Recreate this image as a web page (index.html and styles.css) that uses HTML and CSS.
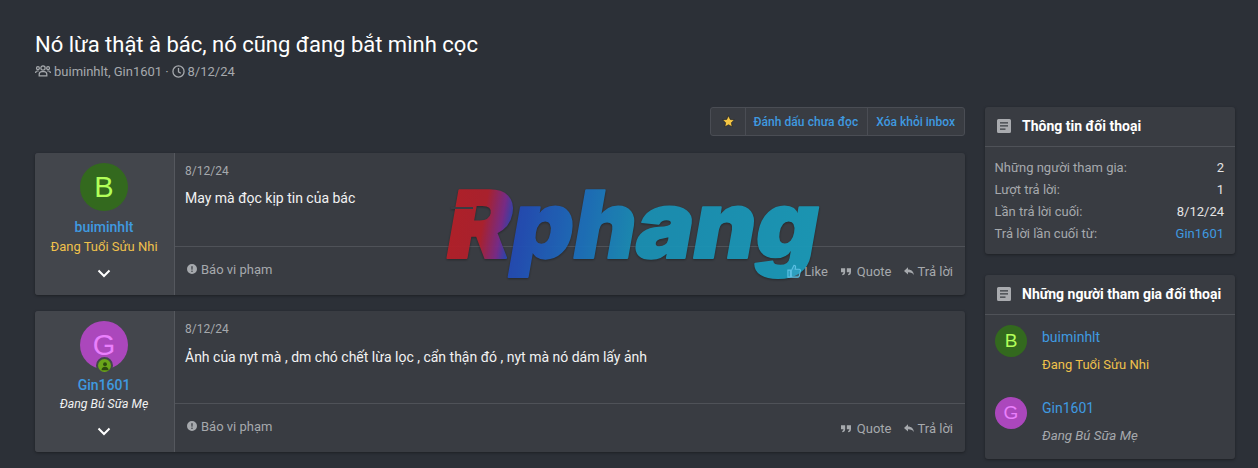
FILE: index.html
```html
<!DOCTYPE html>
<html lang="vi">
<head>
<meta charset="utf-8">
<title>Nó lừa thật à bác, nó cũng đang bắt mình cọc</title>
<link rel="stylesheet" href="styles.css">
</head>
<body>
<svg class="sprite" width="0" height="0" aria-hidden="true">
  <symbol id="doc" viewBox="0 0 14 14"><path fill-rule="evenodd" d="M1.5 0h11A1.5 1.5 0 0 1 14 1.500v11a1.500 1.500 0 0 1-1.500 1.500h-11A1.500 1.500 0 0 1 0 12.500v-11A1.500 1.500 0 0 1 1.500 0zM3 3.200v1.300h8V3.200zM3 6.300v1.300h8V6.300zM3 9.400v1.300h5.500V9.400z"/></symbol>
  <symbol id="flag" viewBox="0 0 14 14"><path fill-rule="evenodd" d="M7 0a7 7 0 1 1 0 14A7 7 0 0 1 7 0zM6 3l.3 5h1.400L8 3zM7 9a1.100 1.100 0 1 0 0 2.200A1.100 1.100 0 0 0 7 9z"/></symbol>
  <symbol id="quote" viewBox="0 0 12 10"><path d="M0 1h5v4.500C5 8 3.500 9.300 1.500 9.500V8C2.500 7.800 3 7 3 6H0zM7 1h5v4.500C12 8 10.500 9.300 8.500 9.500V8C9.500 7.800 10 7 10 6H7z"/></symbol>
  <symbol id="reply" viewBox="0 0 12 10"><path d="M0 4.300 4.800 0v2.500c4 0 6.700 2.500 7.200 7-1.500-2.500-3.500-3.500-7.200-3.500v2.500z"/></symbol>
  <symbol id="chev" viewBox="0 0 14 9"><path d="M1.500 1.500 7 7l5.500-5.500" fill="none" stroke="currentColor" stroke-width="2"/></symbol>
</svg>

<div class="page">
  <header class="head">
    <h1 class="title">Nó lừa thật à bác, nó cũng đang bắt mình cọc</h1>
    <div class="meta">
      <svg class="ico-users" viewBox="0 0 18 14" aria-hidden="true"><g fill="none" stroke="currentColor" stroke-width="1.400"><circle cx="9" cy="3.600" r="2.400"/><path d="M4.700 12.500V11c0-2 1.500-3.300 3-3.300h2.600c1.500 0 3 1.300 3 3.300v1.500z"/><circle cx="3.300" cy="3.800" r="1.600"/><circle cx="14.700" cy="3.800" r="1.600"/><path d="M.7 9.300c0-1.500.8-2.300 2-2.300h1.500M17.300 9.300c0-1.500-.8-2.300-2-2.300h-1.500"/></g></svg>
      <span>buiminhlt, Gin1601</span>
      <span class="dot">·</span>
      <svg class="ico-clock" viewBox="0 0 14 14" aria-hidden="true"><g fill="none" stroke="currentColor" stroke-width="1.400"><circle cx="7" cy="7" r="6"/><path d="M7 3.300V7.400l2.500 1.500"/></g></svg>
      <span>8/12/24</span>
    </div>
  </header>

  <div class="columns">
    <main class="main">
      <div class="actions">
        <div class="btn-group">
          <span class="btn btn-star"><svg class="ico-star" viewBox="0 0 14 14" aria-hidden="true"><path d="M7 .8l1.900 4 4.300.5-3.200 3 .9 4.400L7 10.500l-3.900 2.200.9-4.400-3.200-3 4.300-.5z" fill="#f6c744" stroke="#1d1d1d" stroke-width=".6"/></svg></span>
          <a class="btn btn-mark">Đánh dấu chưa đọc</a>
          <a class="btn">Xóa khỏi inbox</a>
        </div>
      </div>

      <article class="post post-a">
        <aside class="user">
          <div class="avatar avatar-lg avatar-b">B</div>
          <a class="uname">buiminhlt</a>
          <div class="utitle utitle-gold">Đang Tuổi Sửu Nhi</div>
          <svg class="chev"><use href="#chev"/></svg>
        </aside>
        <div class="body">
          <div class="top">
            <div class="date">8/12/24</div>
            <div class="msg">May mà đọc kịp tin của bác</div>
          </div>
          <footer class="foot">
            <span class="report"><svg class="ico-flag"><use href="#flag"/></svg>Báo vi phạm</span>
            <div class="foot-acts">
              <span class="act act-like"><svg class="ico-like" viewBox="0 0 16 16" aria-hidden="true"><path d="M1 7h3v8H1zM5 7.500 8 1.500c1.300 0 2 1 1.800 2.300L9.400 6H14c1 0 1.500.8 1.300 1.700l-1.200 6c-.2.800-.7 1.300-1.500 1.300H5z" fill="#4fb7dc" fill-opacity=".35" stroke="#5cc0e4" stroke-width="1.200"/></svg>Like</span>
              <span class="act"><svg class="ico-q ico-quote"><use href="#quote"/></svg>Quote</span>
              <span class="act"><svg class="ico-q ico-reply"><use href="#reply"/></svg>Trả lời</span>
            </div>
          </footer>
        </div>
      </article>

      <article class="post post-b">
        <aside class="user">
          <div class="avatar avatar-lg avatar-g">G
            <span class="badge"><svg viewBox="0 0 12 12" aria-hidden="true"><circle cx="6" cy="3.800" r="2.300"/><path d="M1.800 11c0-2.500 1.700-4 4.200-4s4.200 1.500 4.200 4z"/></svg></span>
          </div>
          <a class="uname">Gin1601</a>
          <div class="utitle utitle-it">Đang Bú Sữa Mẹ</div>
          <svg class="chev"><use href="#chev"/></svg>
        </aside>
        <div class="body">
          <div class="top">
            <div class="date">8/12/24</div>
            <div class="msg">Ảnh của nyt mà , dm chó chết lừa lọc , cẩn thận đó , nyt mà nó dám lấy ảnh</div>
          </div>
          <footer class="foot">
            <span class="report"><svg class="ico-flag"><use href="#flag"/></svg>Báo vi phạm</span>
            <div class="foot-acts">
              <span class="act"><svg class="ico-q ico-quote"><use href="#quote"/></svg>Quote</span>
              <span class="act"><svg class="ico-q ico-reply"><use href="#reply"/></svg>Trả lời</span>
            </div>
          </footer>
        </div>
      </article>
    </main>

    <aside class="side">
      <section class="block block-info">
        <h3 class="block-head"><svg class="ico-doc"><use href="#doc"/></svg>Thông tin đối thoại</h3>
        <dl class="rows">
          <div class="row"><dt>Những người tham gia:</dt><dd>2</dd></div>
          <div class="row"><dt>Lượt trả lời:</dt><dd>1</dd></div>
          <div class="row"><dt>Lần trả lời cuối:</dt><dd>8/12/24</dd></div>
          <div class="row"><dt>Trả lời lần cuối từ:</dt><dd class="link">Gin1601</dd></div>
        </dl>
      </section>
      <section class="block block-people">
        <h3 class="block-head"><svg class="ico-doc"><use href="#doc"/></svg>Những người tham gia đối thoại</h3>
        <ul class="people">
          <li class="person">
            <div class="avatar avatar-sm avatar-b">B</div>
            <div class="pinfo"><a class="pname">buiminhlt</a><div class="ptitle utitle-gold">Đang Tuổi Sửu Nhi</div></div>
          </li>
          <li class="person">
            <div class="avatar avatar-sm avatar-g">G</div>
            <div class="pinfo"><a class="pname">Gin1601</a><div class="ptitle ptitle-it">Đang Bú Sữa Mẹ</div></div>
          </li>
        </ul>
      </section>
    </aside>
  </div>

  <svg class="watermark" viewBox="0 0 380 100" aria-label="Rphang">
    <defs>
      <linearGradient id="wm" gradientUnits="userSpaceOnUse" x1="0" y1="0" x2="380" y2="0">
        <stop offset="0" stop-color="#b81f26"/>
        <stop offset=".13" stop-color="#b0202c"/>
        <stop offset=".18" stop-color="#7a2a8a"/>
        <stop offset=".21" stop-color="#2348b4"/>
        <stop offset=".4" stop-color="#1c70bb"/>
        <stop offset=".55" stop-color="#1a90b4"/>
        <stop offset="1" stop-color="#1a9ab8"/>
      </linearGradient>
    </defs>
    <text class="wm-text" transform="skewX(-10)" x="16" y="73" textLength="371" lengthAdjust="spacingAndGlyphs" fill="url(#wm)" stroke="url(#wm)">Rphang</text>
    <line class="wm-slit" x1="11" y1="23" x2="33" y2="23"/>
  </svg>
</div>
</body>
</html>
```
FILE: styles.css
```css
* { box-sizing: border-box; }
html, body { margin: 0; height: 468px; overflow: hidden; }
body {
  background: #2c3037;
  font-family: Roboto, "Noto Sans", sans-serif;
  font-size: 13px;
  color: #e4e4e4;
}
.sprite { position: absolute; }
.page { position: relative; padding: 30px 23px 0 35px; }

.title { margin: 0; font-size: 22px; font-weight: 400; line-height: 29px; color: #fff; }
.meta { display: flex; align-items: center; gap: 3px; margin-top: 4px; height: 16px; color: #a6a9ad; font-size: 13px; }
.ico-users { width: 16px; height: 14px; }
.ico-clock { width: 13px; height: 13px; }

.columns { display: flex; gap: 20px; margin-top: 28px; }
.main { width: 930px; }
.side { width: 250px; }

.actions { display: flex; justify-content: flex-end; margin-bottom: 17px; }
.btn-group { display: flex; height: 29px; border: 1px solid #4a4d54; border-radius: 3px; background: #393c42; }
.btn { display: flex; align-items: center; padding: 0 9px 0 8px; font-size: 12px; font-weight: 500; color: #3f9ae0; border-left: 1px solid #4a4d54; }
.btn-star { width: 34px; padding: 0; justify-content: center; border-left: 0; }
.btn-mark { padding: 0 9px 0 7px; letter-spacing: .06px; }
.ico-star { width: 13px; height: 13px; }

.post { display: flex; background: #393c42; border-radius: 3px; box-shadow: 0 1px 3px rgba(0,0,0,.35); }
.post-a { height: 142px; margin-bottom: 16px; }
.post-b { height: 141px; }
.user {
  width: 140px; flex: none; display: flex; flex-direction: column; align-items: center;
  padding: 10px 1px 0 0; background: #43464c; border-right: 1px solid #55585e; border-radius: 3px 0 0 3px;
}
.avatar { display: flex; align-items: center; justify-content: center; border-radius: 50%; font-family: "Liberation Sans", sans-serif; position: relative; }
.avatar-lg { width: 48px; height: 48px; font-size: 29px; }
.avatar-sm { width: 32px; height: 32px; font-size: 19px; flex: none; }
.avatar-b { background: #33691e; color: #b2ff59; }
.avatar-g { background: #ab47bc; color: #ea80fc; }
.badge {
  position: absolute; left: 16px; top: 36px; width: 17px; height: 17px; border-radius: 50%;
  background: #6aa51a; border: 2px solid #43464c; display: flex; align-items: center; justify-content: center;
}
.badge svg { width: 10px; height: 10px; fill: #2d4a0f; }
.uname { margin-top: 8px; font-size: 14px; font-weight: 500; line-height: 17px; color: #3f9ae0; }
.utitle { font-size: 13px; line-height: 17px; margin-top: 2px; }
.utitle-gold { color: #f0c14b; }
.utitle-it { font-style: italic; color: #f2f2f2; font-size: 12.300px; }
.chev { width: 14px; height: 9px; margin-top: 14px; color: #fff; }

.body { flex: 1; display: flex; flex-direction: column; min-width: 0; }
.top { height: 93px; padding: 10px 10px 0; border-bottom: 1px solid #4f5258; }
.post-a .top { height: 94px; }
.post-a .msg { margin-top: 10px; }
.date { font-size: 12px; line-height: 16px; color: #a6a9ad; }
.msg { margin-top: 11px; font-size: 14px; line-height: 18px; color: #f2f2f2; }
.foot { flex: 1; display: flex; justify-content: space-between; padding: 14px 12px 0 12px; color: #a6a9ad; }
.report { display: flex; align-items: center; height: 16px; font-size: 13px; }
.ico-flag { width: 10px; height: 10px; margin-right: 4px; fill: #a6a9ad; }
.foot-acts { display: flex; gap: 12px; margin-top: 2px; }
.act { display: flex; align-items: center; height: 16px; gap: 5px; font-size: 13px; }
.act-like { margin-right: 1px; position: relative; z-index: 1; }
.ico-q { width: 10px; height: 9px; fill: #a6a9ad; }
.ico-quote { margin-right: 1px; }
.ico-reply { margin-right: -1px; }
.ico-like { width: 14px; height: 14px; margin-right: -2px; }

.block { background: #393c42; border-radius: 3px; box-shadow: 0 1px 3px rgba(0,0,0,.35); }
.block-info { height: 147px; margin-bottom: 21px; }
.block-people { height: 184px; }
.block-head {
  display: flex; align-items: center; margin: 0; height: 40px; padding: 0 0 2px 12px;
  font-size: 14px; font-weight: 700; color: #fff; border-bottom: 1px solid #4f5258;
}
.ico-doc { width: 14px; height: 14px; margin-right: 11px; fill: #a9abaf; }
.rows { margin: 0; padding: 10px 11px 0 9.500px; }
.row { display: flex; justify-content: space-between; height: 22px; line-height: 22px; }
.row dt { color: #a6a9ad; }
.row dd { margin: 0; color: #e4e4e4; }
.row dd.link { color: #3f9ae0; }
.people { list-style: none; margin: 0; padding: 10px 10px 0; }
.person { display: flex; gap: 15px; height: 72px; }
.pinfo { padding-top: 3px; }
.person + .person .pinfo { padding-top: 2px; }
.pname { display: block; font-size: 14px; line-height: 18px; color: #3f9ae0; }
.ptitle { margin-top: 10px; line-height: 18px; }
.ptitle-it { font-style: italic; color: #a6a9ad; font-size: 13.300px; }

.watermark { position: absolute; left: 440px; top: 185px; width: 380px; height: 100px; overflow: visible; pointer-events: none; opacity: .94; filter: drop-shadow(0 1px 1px rgba(0,0,0,.35)); }
.wm-text { font-family: Inter, "DejaVu Sans", sans-serif; font-weight: 900; font-size: 93px; stroke-width: 2px; stroke-linejoin: round; }
.wm-slit { stroke: #393c42; stroke-width: 2px; }
```
